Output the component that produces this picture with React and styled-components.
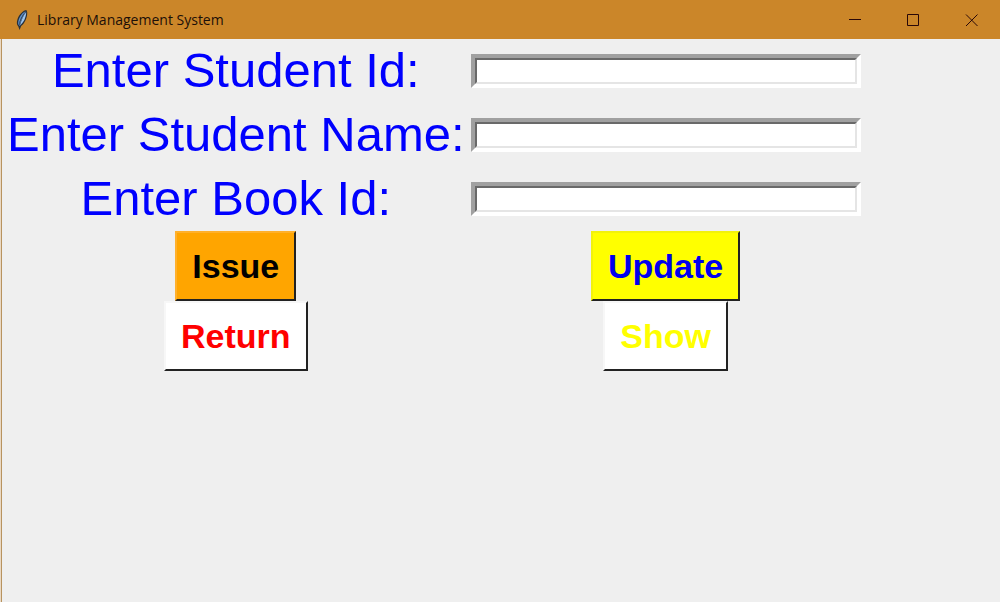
import React from "react";
import styled, { createGlobalStyle } from "styled-components";

const GlobalStyle = createGlobalStyle`
  *, *::before, *::after { box-sizing: border-box; }
  body {
    margin: 0;
    background: #efefef;
    font-family: "Liberation Sans", Arial, sans-serif;
  }
`;

const Window = styled.div`
  display: flex;
  flex-direction: column;
  min-height: 100vh;
  background: #efefef;
`;

const TitleBar = styled.header`
  display: flex;
  align-items: center;
  height: 39px;
  padding-left: 14px;
  background: #cb8629;
`;

const Title = styled.h1`
  flex: 1;
  margin: 0 0 0 7px;
  font: 400 14px/20px "Open Sans", "Noto Sans", sans-serif;
  color: #1c0f08;
`;

const CaptionButton = styled.button`
  display: flex;
  align-items: center;
  justify-content: center;
  width: 58px;
  height: 39px;
  padding: 0;
  border: 0;
  background: transparent;
  color: #2a0808;
`;

const Content = styled.main`
  flex: 1;
  border-left: 1px solid #ead9c4;
  box-shadow: inset 1px 0 #b8935f;
`;

const Form = styled.form`
  display: grid;
  grid-template-columns: max-content max-content;
  grid-template-rows: repeat(3, 64px);
  grid-auto-rows: 70px;
  align-items: center;
  justify-items: center;
`;

const Label = styled.label`
  padding: 0 6px 2px;
  font-size: 49px;
  line-height: 60px;
  color: #0000fe;
`;

const Field = styled.span`
  display: flex;
  width: 390px;
  border: 4px solid;
  border-color: #a0a0a0 #ffffff #ffffff #a0a0a0;
`;

const Entry = styled.input`
  flex: 1;
  min-width: 0;
  height: 26px;
  padding: 0 2px;
  border: 2px solid;
  border-color: #696969 #e5e5e5 #e5e5e5 #696969;
  border-radius: 0;
  outline: 0;
  background: #ffffff;
  font: 14px "Liberation Sans", Arial, sans-serif;
`;

const ActionButton = styled.button`
  height: 70px;
  padding: 0 15px;
  border: 2px solid;
  border-color: ${(p) => p.$edge} #222222 #222222 ${(p) => p.$edge};
  border-radius: 0;
  background: ${(p) => p.$face};
  color: ${(p) => p.$ink};
  font: 700 34px/40px "Liberation Sans", Arial, sans-serif;
`;

const fields = [
  { id: "student-id", label: "Enter Student Id:" },
  { id: "student-name", label: "Enter Student Name:" },
  { id: "book-id", label: "Enter Book Id:" },
];

const actions = [
  { label: "Issue", face: "#ffa500", edge: "#ffb02b", ink: "#000000" },
  { label: "Update", face: "#ffff00", edge: "#f2f20c", ink: "#0000ee" },
  { label: "Return", face: "#ffffff", edge: "#f7f7f7", ink: "#ff0000" },
  { label: "Show", face: "#ffffff", edge: "#f7f7f7", ink: "#ffff00" },
];

function FeatherIcon() {
  return (
    <svg width="16" height="22" viewBox="0 0 16 22" aria-hidden="true">
      <path
        d="M12.4 1C9.4 1.2 5 5.4 3.4 10.4C2.6 13 2.6 15.6 4.2 17.2L5.6 21L7.2 17C10.4 14.6 13.6 8.6 13.2 3.2Z"
        fill="#28303a"
      />
      <path
        d="M11.8 2.2C9 3 5.8 7 4.6 11.2C4 13.4 4 15.2 4.8 16.2C5.2 12 7.6 6.4 11.8 2.2Z"
        fill="#5f92cc"
      />
      <path
        d="M12.2 3C9.4 6.4 7.2 11.4 6 16.4C9.2 14 12.2 8.6 12.2 3Z"
        fill="#9cc4ee"
      />
      <path d="M11.4 3.4C8.4 7.6 6.4 12 5.4 17" fill="none" stroke="#5f92cc" strokeWidth="0.6" />
    </svg>
  );
}

function CaptionIcon({ d }) {
  return (
    <svg width="14" height="14" viewBox="0 0 14 14" fill="none" stroke="currentColor" aria-hidden="true">
      <path d={d} />
    </svg>
  );
}

export default function App() {
  return (
    <>
      <GlobalStyle />
      <Window>
        <TitleBar>
          <FeatherIcon />
          <Title>Library Management System</Title>
          <CaptionButton type="button" aria-label="Minimize">
            <CaptionIcon d="M1 6.5H13" />
          </CaptionButton>
          <CaptionButton type="button" aria-label="Maximize">
            <CaptionIcon d="M1.5 1.5H12.5V12.5H1.5Z" />
          </CaptionButton>
          <CaptionButton type="button" aria-label="Close">
            <CaptionIcon d="M2 1.5L13.5 13M13.5 1.5L2 13" />
          </CaptionButton>
        </TitleBar>
        <Content>
          <Form onSubmit={(e) => e.preventDefault()}>
            {fields.map((f) => (
              <React.Fragment key={f.id}>
                <Label htmlFor={f.id}>{f.label}</Label>
                <Field>
                  <Entry id={f.id} type="text" />
                </Field>
              </React.Fragment>
            ))}
            {actions.map((a) => (
              <ActionButton key={a.label} type="button" $face={a.face} $edge={a.edge} $ink={a.ink}>
                {a.label}
              </ActionButton>
            ))}
          </Form>
        </Content>
      </Window>
    </>
  );
}
